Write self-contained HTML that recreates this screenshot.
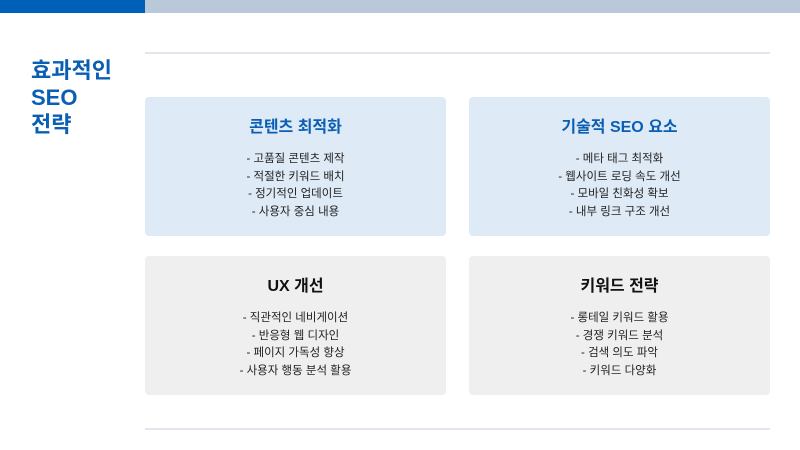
<!DOCTYPE html>
<html><head><meta charset="utf-8"><style>
*{margin:0;padding:0;box-sizing:border-box}
body{width:800px;height:450px;background:#fff;position:relative;overflow:hidden;font-family:"Liberation Sans","Noto Sans CJK KR",sans-serif}
.bar1{position:absolute;left:0;top:0;width:145px;height:13px;background:#0060b8}
.bar2{position:absolute;left:145px;top:0;width:655px;height:13px;background:#b9c9d9}
.line{position:absolute;left:145px;width:625px;height:2px;background:#e1e6ec}
h1{position:absolute;left:31px;top:57px;font-size:22px;line-height:27px;color:#0a5fb4;font-weight:700}
.card{position:absolute;width:301px;height:139px;border-radius:4px;text-align:center}
.blue{background:#deeaf6}.grey{background:#efefef}
.card h2{font-size:16px;font-weight:700;margin-top:20px;line-height:22px}
.blue h2{color:#0a5fb4}.grey h2{color:#111}
.card ul{list-style:none;margin-top:12px;font-size:11.5px;line-height:17.5px;color:#222}
</style></head><body>
<div class="bar1"></div><div class="bar2"></div>
<div class="line" style="top:52px"></div>
<div class="line" style="top:428px"></div>
<h1>효과적인<br>SEO<br>전략</h1>
<div class="card blue" style="left:145px;top:97px"><h2>콘텐츠 최적화</h2><ul><li>- 고품질 콘텐츠 제작</li><li>- 적절한 키워드 배치</li><li>- 정기적인 업데이트</li><li>- 사용자 중심 내용</li></ul></div>
<div class="card blue" style="left:469px;top:97px"><h2>기술적 SEO 요소</h2><ul><li>- 메타 태그 최적화</li><li>- 웹사이트 로딩 속도 개선</li><li>- 모바일 친화성 확보</li><li>- 내부 링크 구조 개선</li></ul></div>
<div class="card grey" style="left:145px;top:256px"><h2>UX 개선</h2><ul><li>- 직관적인 네비게이션</li><li>- 반응형 웹 디자인</li><li>- 페이지 가독성 향상</li><li>- 사용자 행동 분석 활용</li></ul></div>
<div class="card grey" style="left:469px;top:256px"><h2>키워드 전략</h2><ul><li>- 롱테일 키워드 활용</li><li>- 경쟁 키워드 분석</li><li>- 검색 의도 파악</li><li>- 키워드 다양화</li></ul></div>
</body></html>
